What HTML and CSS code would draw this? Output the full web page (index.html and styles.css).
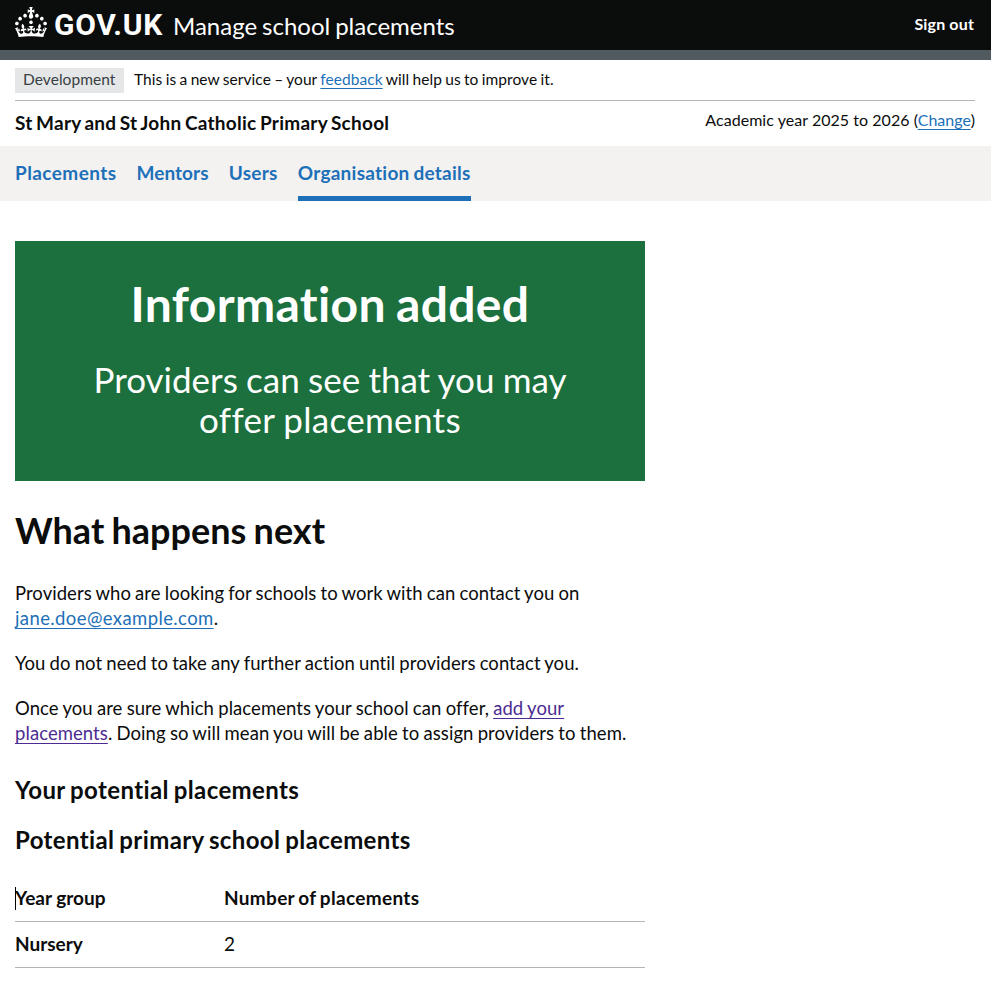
FILE: index.html
```html
<!DOCTYPE html>
<html lang="en">
<head>
<meta charset="utf-8">
<title>Information added - Manage school placements - GOV.UK</title>
<link rel="stylesheet" href="styles.css">
</head>
<body>
<header class="header">
  <div class="brand">
    <svg class="crown" viewBox="0 0 32 30" width="32" height="30" aria-hidden="true"><path fill="currentColor" d="M22.6 10.4c-1 .4-2-.1-2.4-1-.4-.9.1-2 1-2.4.9-.4 2 .1 2.4 1s-.1 2-1 2.4m-5.9 6.7c-.9.4-2-.1-2.4-1-.4-.9.1-2 1-2.4.9-.4 2 .1 2.4 1s-.1 2-1 2.4m10.8-3.7c-1 .4-2-.1-2.4-1-.4-.9.1-2 1-2.4.9-.4 2 .1 2.4 1s0 2-1 2.4m3.3 4.8c-1 .4-2-.1-2.4-1-.4-.9.1-2 1-2.4.9-.4 2 .1 2.4 1s-.1 2-1 2.4M17 4.7l2.3 1.2V2.5l-2.3.7-.2-.2.9-3h-3.4l.9 3-.2.2c-.1.1-2.3-.7-2.3-.7v3.4L15 4.7c.1.1.1.2.2.2l-1.3 4c-.1.2-.1.4-.1.6 0 1.1.8 2 1.9 2.2h.7c1-.2 1.9-1.1 1.9-2.1 0-.2 0-.4-.1-.6l-1.3-4c-.1-.2 0-.2.1-.3m-7.6 5.7c.9.4 2-.1 2.4-1 .4-.9-.1-2-1-2.4-.9-.4-2 .1-2.4 1s0 2 1 2.4m-5 3c.9.4 2-.1 2.4-1 .4-.9-.1-2-1-2.4-.9-.4-2 .1-2.4 1s.1 2 1 2.4m-3.2 4.8c.9.4 2-.1 2.4-1 .4-.9-.1-2-1-2.4-.9-.4-2 .1-2.4 1s0 2 1 2.4m14.8 11c4.4 0 8.6.3 12.3.8 1.1-4.5 2.4-7 3.7-8.8l-2.5-.9c.2 1.3.3 1.9 0 2.7-.4-.4-.8-1.1-1.1-2.3l-1.2 4c.7-.5 1.3-.8 2-.9-1.1 2.5-2.6 3.1-3.5 3-1.1-.2-1.7-1.2-1.5-2.1.3-1.2 1.5-1.5 2.1-.1 1.1-2.3-.8-3-2-2.3 1.9-1.9 2.1-3.5.6-5.6-2.1 1.6-2.1 3.2-1.2 5.5-1.2-1.4-3.2-.6-2.5 1.6.9-1.4 2.1-.5 1.9.8-.2 1.1-1.7 2.1-3.5 1.9-2.7-.2-2.9-2.1-2.9-3.6.7-.1 1.9.5 2.9 1.9l.4-4.3c-1.1 1.1-2.1 1.4-3.2 1.4.4-1.2 2.1-3 2.1-3h-5.4s1.7 1.9 2.1 3c-1.1 0-2.1-.2-3.2-1.4l.4 4.3c1-1.4 2.2-2 2.9-1.9-.1 1.5-.2 3.4-2.9 3.6-1.9.2-3.4-.8-3.5-1.9-.2-1.3 1-2.2 1.9-.8.7-2.3-1.2-3-2.5-1.6.9-2.2.9-3.9-1.2-5.5-1.5 2-1.3 3.7.6 5.6-1.2-.7-3.1 0-2 2.3.6-1.4 1.8-1.1 2.1.1.2.9-.3 1.9-1.5 2.1-.9.2-2.4-.5-3.5-3 .6 0 1.2.3 2 .9l-1.2-4c-.3 1.1-.7 1.9-1.1 2.3-.3-.8-.2-1.4 0-2.7l-2.9.9C1.3 23 2.6 25.5 3.7 30c3.7-.5 7.9-.8 12.3-.8"/></svg>
    <span class="logotype">GOV.UK</span>
    <span class="service">Manage school placements</span>
  </div>
  <a class="sign-out" href="#">Sign out</a>
</header>
<div class="phase">
  <strong class="tag">Development</strong>
  <span>This is a new service – your <a class="link" href="#">feedback</a> will help us to improve it.</span>
</div>
<div class="organisation">
  <span class="school">St Mary and St John Catholic Primary School</span>
  <span class="year">Academic year 2025 to 2026 (<a class="link" href="#">Change</a>)</span>
</div>
<nav class="nav">
  <a class="nav-item nav-placements" href="#">Placements</a>
  <a class="nav-item nav-mentors" href="#">Mentors</a>
  <a class="nav-item nav-users" href="#">Users</a>
  <a class="nav-item nav-current" href="#">Organisation details</a>
</nav>
<main class="main">
  <div class="panel">
    <h1 class="panel-title">Information added</h1>
    <div class="panel-body">Providers can see that you may <span class="panel-end">offer placements</span></div>
  </div>
  <h2 class="heading-l">What happens next</h2>
  <p class="body">Providers who are looking for schools to work with can contact you on <a class="link email" href="#">jane.doe@example.com</a>.</p>
  <p class="body">You do not need to take any further action until providers contact you.</p>
  <p class="body body-wide">Once you are sure which placements your school can offer, <a class="link visited" href="#">add your placements</a>. Doing so will mean you will be able to assign providers to them.</p>
  <h3 class="heading-m">Your potential placements</h3>
  <h3 class="heading-m">Potential primary school placements</h3>
  <div class="table" role="table">
    <div class="row" role="row">
      <span class="cell-head has-caret" role="columnheader">Year group</span>
      <span class="cell-head number" role="columnheader">Number of placements</span>
    </div>
    <div class="row" role="row">
      <span class="cell-head" role="rowheader">Nursery</span>
      <span class="cell" role="cell">2</span>
    </div>
  </div>
</main>
</body>
</html>
```
FILE: styles.css
```css
* { box-sizing: border-box; }

body {
  margin: 0;
  background: #fff;
  color: #0b0c0c;
  font-family: Lato, "Liberation Sans", sans-serif;
  font-variant-ligatures: none;
  -webkit-font-smoothing: antialiased;
}

.link {
  color: #1d70b8;
  text-decoration: underline;
  text-decoration-thickness: 1px;
  text-underline-offset: 3px;
}
.visited { color: #4c2c92; }
.email { letter-spacing: 0.4px; }

.header {
  display: flex;
  justify-content: space-between;
  align-items: flex-start;
  height: 60px;
  padding: 0 17px 0 15px;
  background: #0b0c0c;
  border-bottom: 10px solid #505a5f;
  color: #fff;
}
.brand { display: flex; align-items: flex-start; }
.crown { display: block; margin-top: 7px; }
.logotype {
  width: 109px;
  margin: 10px 0 0 7px;
  font: 700 30px/30px Roboto, sans-serif;
  letter-spacing: 0.7px;
  white-space: nowrap;
}
.service {
  margin: 11px 0 0 10px;
  font-size: 24px;
  line-height: 30px;
  word-spacing: -1.2px;
}
.sign-out {
  margin-top: 14px;
  color: #fff;
  font-size: 16px;
  font-weight: 700;
  line-height: 20px;
  letter-spacing: 0.15px;
  text-decoration: none;
}

.phase {
  display: flex;
  gap: 10px;
  margin: 0 16px 0 15px;
  padding: 8px 0 7px;
  border-bottom: 1px solid #b1b4b6;
  font-size: 15.5px;
  line-height: 23px;
  letter-spacing: 0.06px;
  word-spacing: -0.7px;
}
.tag {
  width: 109px;
  height: 25px;
  padding-left: 8px;
  background: #e5e6e7;
  color: #383f43;
  font-weight: 400;
}

.organisation {
  display: flex;
  justify-content: space-between;
  height: 45px;
  padding: 9px 16px 0 15px;
}
.school {
  font-size: 19px;
  font-weight: 700;
  line-height: 25px;
  letter-spacing: 0.27px;
  word-spacing: -1.5px;
}
.year { font-size: 16px; line-height: 20px; letter-spacing: 0.04px; }

.nav {
  display: flex;
  gap: 20px;
  height: 55px;
  padding: 14px 15px 0;
  background: #f3f2f1;
}
.nav-item {
  height: 41px;
  color: #1d70b8;
  font-size: 19px;
  font-weight: 700;
  line-height: 25px;
  text-decoration: none;
}
.nav-placements { letter-spacing: 0.42px; }
.nav-mentors { letter-spacing: 0.06px; }
.nav-users { letter-spacing: 0.3px; }
.nav-current {
  border-bottom: 5px solid #1d70b8;
  letter-spacing: 0.25px;
  word-spacing: -1px;
}

.main { width: 645px; padding: 40px 0 0 15px; }

.panel {
  height: 240px;
  padding: 38px 70px 0;
  background: #1b703d;
  color: #fff;
  text-align: center;
}
.panel-title {
  margin: 0 0 30px;
  font-size: 48px;
  font-weight: 700;
  line-height: 50px;
  letter-spacing: 0.35px;
  word-spacing: -2px;
}
.panel-body { font-size: 35px; line-height: 40px; word-spacing: -0.7px; }
.panel-end { letter-spacing: 0.33px; }

.heading-l {
  margin: 29px 0 31px;
  font-size: 36px;
  font-weight: 700;
  line-height: 40px;
  letter-spacing: 0;
  word-spacing: -1.5px;
}
.body {
  margin: 0 0 20px;
  font-size: 18.5px;
  line-height: 25px;
  letter-spacing: 0.04px;
  word-spacing: -0.6px;
}
.body-wide { letter-spacing: 0.07px; }
.email { letter-spacing: 0.4px; }
.heading-m {
  margin: 29px 0 20px;
  font-size: 24px;
  font-weight: 700;
  line-height: 30px;
  letter-spacing: 0.38px;
  word-spacing: -1.3px;
}

.heading-m + .heading-m { margin: 20px 0 21px; }

.row {
  display: grid;
  grid-template-columns: 209px 1fr;
  height: 46px;
  padding-top: 9px;
  border-bottom: 1px solid #b1b4b6;
  font-size: 19px;
  line-height: 25px;
}
.cell-head { font-weight: 700; }
.number { letter-spacing: 0.32px; word-spacing: -1.2px; }
.has-caret { position: relative; }
.has-caret::before {
  content: "";
  position: absolute;
  top: 2px;
  left: 0;
  width: 1px;
  height: 23px;
  background: #000;
}
```
